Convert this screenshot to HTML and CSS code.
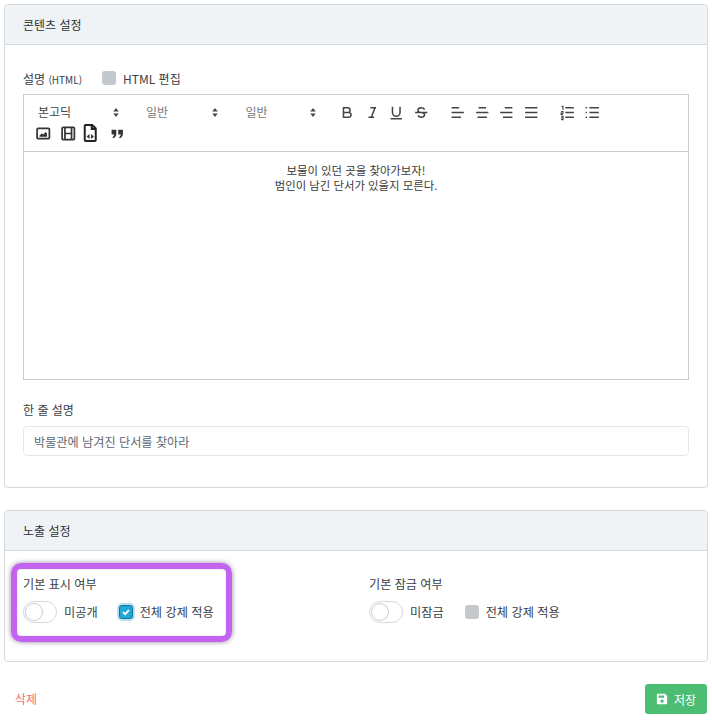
FILE: index.html
```html
<!DOCTYPE html>
<html lang="ko">
<head>
    <meta charset="UTF-8">
    <meta name="viewport" content="width=device-width, initial-scale=1.0">
    <title>콘텐츠 설정</title>
    <link rel="stylesheet" href="styles.css">
</head>
<body>
    <!-- Content settings -->
    <section class="card card-content">
        <div class="card-header">콘텐츠 설정</div>
        <div class="card-body">
            <div class="editor-label">
                <span>설명 <small>(HTML)</small></span>
                <label class="check"><span class="check-box"></span>HTML 편집</label>
            </div>

            <div class="editor">
                <div class="toolbar">
                    <div class="toolbar-row">
                        <span class="picker picker-first">본고딕<svg class="arrows" viewBox="0 0 8 12"><path d="M4 1 7 5H1zM4 11 1 7h6z"/></svg></span>
                        <span class="picker picker-second">일반<svg class="arrows" viewBox="0 0 8 12"><path d="M4 1 7 5H1zM4 11 1 7h6z"/></svg></span>
                        <span class="picker picker-third">일반<svg class="arrows" viewBox="0 0 8 12"><path d="M4 1 7 5H1zM4 11 1 7h6z"/></svg></span>

                        <span class="tool-group">
                            <svg class="tool" viewBox="0 0 18 18"><path d="M5 4h4.500a2.500 2.500 0 0 1 0 5H5zM5 9h5.500a2.500 2.500 0 0 1 0 5H5z"/></svg>
                            <svg class="tool" viewBox="0 0 18 18"><path d="M7 4h6M5 14h6M8 14l4-10"/></svg>
                            <svg class="tool" viewBox="0 0 18 18"><path d="M5 3v6a4 4 0 0 0 8 0V3M3 15.500h12"/></svg>
                            <svg class="tool" viewBox="0 0 18 18"><path d="M2.500 9h13M12.500 6c-.6-1.300-2-2-3.500-2C7 4 5.500 5 5.500 6.500S7 9 9 9s3.500 1 3.500 2.500S11 14 9 14c-1.500 0-2.900-.7-3.500-2"/></svg>
                        </span>
                        <span class="tool-group">
                            <svg class="tool" viewBox="0 0 18 18"><path d="M3 4h8M3 9h13M3 14h10"/></svg>
                            <svg class="tool" viewBox="0 0 18 18"><path d="M5 4h8M2.500 9h13M4 14h10"/></svg>
                            <svg class="tool" viewBox="0 0 18 18"><path d="M7.500 4h8M2.500 9h13M5.500 14h10"/></svg>
                            <svg class="tool" viewBox="0 0 18 18"><path d="M2.500 4h13M2.500 9h13M2.500 14h13"/></svg>
                        </span>
                        <span class="tool-group">
                            <svg class="tool" viewBox="0 0 18 18"><path d="M7 4h9M7 9h9M7 14h9"/><path class="thin" d="M3 2.500h1.500v3.500M2.500 8h2v1.500h-2V11h2M2.500 13h2v3.500h-2M2.500 14.700h2"/></svg>
                            <svg class="tool" viewBox="0 0 18 18"><path d="M6 4h10M6 9h10M6 14h10M2 4h1.500M2 9h1.500M2 14h1.500"/></svg>
                        </span>
                    </div>
                    <div class="toolbar-row toolbar-row-second">
                        <svg class="tool tool-heavy" viewBox="0 0 18 18"><rect x="2.500" y="3.500" width="13" height="11" rx="1"/><path class="solid" d="M5 12.500v-1.500l2.500-2 1.500 1 2.500-2.500 1.500 1.500v3.500z"/></svg>
                        <svg class="tool tool-heavy" viewBox="0 0 18 18"><rect x="2.500" y="2.500" width="13" height="13" rx="1"/><path d="M5.500 3v12M12.500 3v12M5.500 9h7"/></svg>
                        <svg class="tool tool-file" viewBox="0 0 18 18"><path d="M3.500 1h7.500l3.500 3.500V16a1 1 0 0 1-1 1h-9a1 1 0 0 1-1-1V2a1 1 0 0 1 1-1zM10.500 1v4h4"/><path class="solid" d="M8.300 10v5l-3-2.500zM9.700 10v5l3-2.500z"/></svg>
                        <svg class="tool" viewBox="0 0 18 18"><path class="solid" d="M3 5h5v4.500C8 12 6.500 13.500 4.500 14l-.6-1.300C5 12.200 5.700 11.300 5.800 10H3zM10 5h5v4.500c0 2.500-1.500 4-3.500 4.500l-.6-1.300c1.100-.5 1.800-1.400 1.900-2.700H10z"/></svg>
                    </div>
                </div>
                <div class="editor-body">
                    <p>보물이 있던 곳을 찾아가보자!</p>
                    <p>범인이 남긴 단서가 있을지 모른다.</p>
                </div>
            </div>

            <div class="field-label">한 줄 설명</div>
            <input class="text-input" type="text" value="박물관에 남겨진 단서를 찾아라">
        </div>
    </section>

    <!-- Exposure settings -->
    <section class="card card-exposure">
        <div class="card-header">노출 설정</div>
        <div class="card-body options">
            <div class="option">
                <div class="option-inner highlighted">
                    <div class="option-title">기본 표시 여부</div>
                    <div class="option-row">
                        <span class="switch"><span class="knob"></span></span>
                        <span class="switch-text">미공개</span>
                        <label class="check check-on">
                            <span class="check-box">
                                <svg viewBox="0 0 10 10"><path d="M2 5.200 4.200 7.200 8 3"/></svg>
                            </span>전체 강제 적용
                        </label>
                    </div>
                </div>
            </div>
            <div class="option">
                <div class="option-inner">
                    <div class="option-title">기본 잠금 여부</div>
                    <div class="option-row">
                        <span class="switch"><span class="knob"></span></span>
                        <span class="switch-text">미잠금</span>
                        <label class="check"><span class="check-box"></span>전체 강제 적용</label>
                    </div>
                </div>
            </div>
        </div>
    </section>

    <div class="footer">
        <a href="#" class="delete-link">삭제</a>
        <button type="button" class="save-btn">
            <svg viewBox="0 0 14 14"><path d="M2 1h8.500L13 3.500V12a1 1 0 0 1-1 1H2a1 1 0 0 1-1-1V2a1 1 0 0 1 1-1zm1 1.800v2.700h6.500V2.800zM7 7.500a2 2 0 1 0 0 4 2 2 0 0 0 0-4z" fill-rule="evenodd"/></svg>
            저장
        </button>
    </div>
</body>
</html>
```

FILE: styles.css
```css
body {
    font-family: "Noto Sans CJK KR", "Noto Sans", sans-serif;
    font-size: 12px;
    color: #2f3438;
    background-color: #ffffff;
    margin: 0;
    padding: 4px 4px 6px 4px;
}
.card {
    border: 1px solid #d5d9dc;
    border-radius: 4px;
    background: #ffffff;
}
.card-content {
    height: 484px;
    box-sizing: border-box;
}
.card-exposure {
    margin-top: 22px;
    height: 152px;
    box-sizing: border-box;
}
.card-header {
    height: 40px;
    box-sizing: border-box;
    padding-left: 18px;
    display: flex;
    align-items: center;
    background-color: #f0f3f5;
    border-bottom: 1px solid #d5d9dc;
    border-radius: 3px 3px 0 0;
}
.card-body {
    padding: 0 18px;
}

/* Editor */
.editor-label {
    display: flex;
    align-items: center;
    gap: 20px;
    height: 49px;
    box-sizing: border-box;
    padding-top: 17px;
    color: #3a4045;
}
.editor-label small {
    font-size: 10px;
}
.editor {
    height: 286px;
    box-sizing: border-box;
    border: 1px solid #ccc;
}
.toolbar {
    height: 57px;
    box-sizing: border-box;
    padding: 6px 0 0 7px;
    border-bottom: 1px solid #ccc;
}
.toolbar-row {
    display: flex;
    align-items: center;
    height: 22px;
}
.toolbar-row-second {
    height: 20px;
}
.picker {
    display: block;
    position: relative;
    width: 98.5px;
    box-sizing: border-box;
    font-size: 12px;
    color: #444;
    line-height: 22px;
}
.picker-first { padding-left: 7px; color: #444; }
.picker-second { padding-left: 16.5px; color: #777; }
.picker-third { padding-left: 17.5px; color: #777; margin-right: 8.5px; }
.arrows {
    position: absolute;
    left: 81px;
    top: 6px;
    width: 8px;
    height: 11px;
    fill: #444;
}
.tool-group {
    display: flex;
    margin-right: 12px;
}
.tool {
    width: 24.5px;
    height: 17px;
    flex: none;
    fill: none;
    stroke: #444;
    stroke-width: 1.6;
}
.tool .thin {
    stroke-width: 1.2;
}
.tool .solid {
    fill: #333;
    stroke: none;
}
.tool-heavy {
    stroke: #333;
    stroke-width: 1.8;
}
.tool-file {
    height: 18px;
    margin: 0 2px 0 -2px;
    stroke: #222;
    stroke-width: 2;
}
.editor-body {
    padding-top: 11px;
    text-align: center;
    font-size: 11.4px;
    line-height: 15px;
    color: #3a3a3a;
}
.editor-body p {
    margin: 0;
}

.field-label {
    margin-top: 21px;
    height: 25px;
    color: #3a4045;
}
.text-input {
    display: block;
    width: 100%;
    height: 30px;
    box-sizing: border-box;
    padding: 0 10px;
    border: 1px solid #e4e7ea;
    border-radius: 4px;
    font-family: inherit;
    font-size: 12.15px;
    color: #5c6873;
}

/* Options */
.options {
    display: flex;
}
.option {
    flex: none;
    width: 346px;
    padding-top: 25px;
}
.option-inner {
    display: inline-block;
    position: relative;
}
.highlighted::after {
    content: "";
    position: absolute;
    top: -13px;
    left: -12px;
    right: -18px;
    bottom: -18px;
    border: 6px solid #c264f0;
    border-radius: 10px;
    box-shadow: 0 0 5px rgba(60, 30, 80, 0.55), inset 0 0 2px rgba(60, 30, 80, 0.2);
    pointer-events: none;
}
.option-title {
    height: 24px;
    line-height: 16px;
    font-size: 12.1px;
    color: #3a4045;
}
.option-row {
    display: flex;
    align-items: center;
    height: 24px;
    font-size: 12.2px;
    color: #3a4045;
}
.switch {
    width: 34px;
    height: 22px;
    box-sizing: border-box;
    border: 1px solid #d5d9dc;
    border-radius: 11px;
    background: #fff;
    display: flex;
    align-items: center;
}
.knob {
    width: 18px;
    height: 18px;
    margin-left: 1px;
    border: 1px solid #c8ced3;
    border-radius: 50%;
    background: #fff;
    box-sizing: border-box;
}
.switch-text {
    margin-left: 7px;
    margin-right: 21px;
}
.check {
    display: flex;
    align-items: center;
    gap: 7px;
}
.check-box {
    display: flex;
    align-items: center;
    justify-content: center;
    width: 14px;
    height: 14px;
    border-radius: 3px;
    background-color: #c3c9cd;
}
.check-on .check-box {
    background-color: #20a8d8;
    border: 1px solid #1b6f99;
    box-sizing: border-box;
    box-shadow: 0 0 0 2px #b4e2f2;
}
.check-box svg {
    width: 10px;
    height: 10px;
    fill: none;
    stroke: #fff;
    stroke-width: 1.8;
}

/* Footer */
.footer {
    display: flex;
    justify-content: space-between;
    align-items: center;
    margin-top: 22px;
    padding: 0 1px 0 11px;
}
.delete-link {
    color: #f86c6b;
    text-decoration: none;
    padding-bottom: 2px;
}
.save-btn {
    display: flex;
    align-items: center;
    justify-content: center;
    gap: 6px;
    width: 62px;
    height: 30px;
    padding: 0;
    border: none;
    border-radius: 3px;
    background-color: #4dbd74;
    color: #fff;
    font-family: inherit;
    font-size: 12px;
}
.save-btn svg {
    width: 12px;
    height: 12px;
    fill: #fff;
}
```
